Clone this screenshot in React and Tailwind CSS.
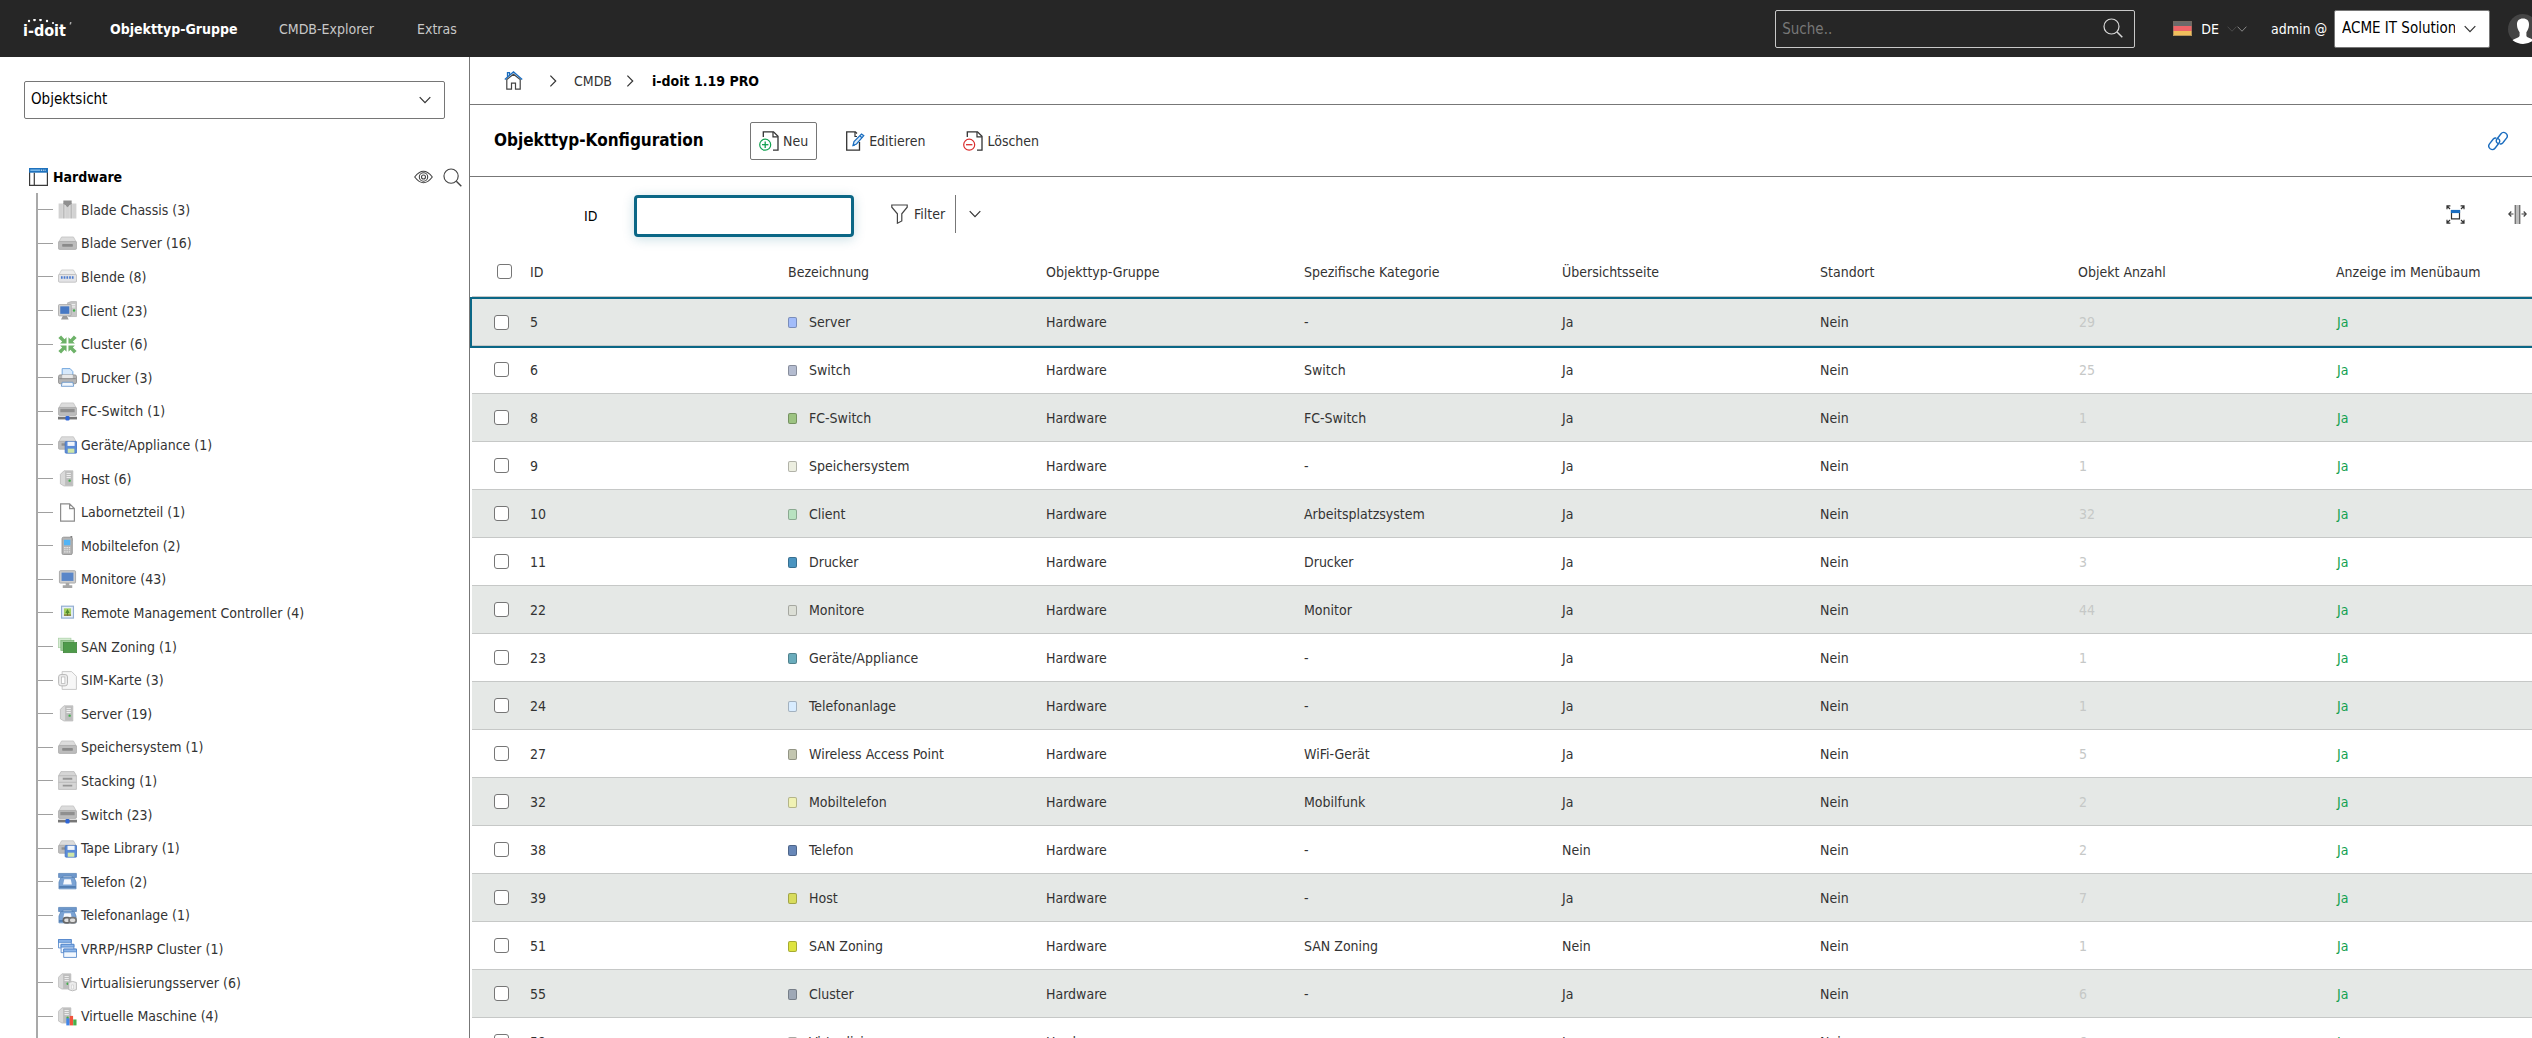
import React from 'react'

const objectTypes = [
  { icon: 'chassis', label: 'Blade Chassis (3)' },
  { icon: 'blade', label: 'Blade Server (16)' },
  { icon: 'panel', label: 'Blende (8)' },
  { icon: 'client', label: 'Client (23)' },
  { icon: 'cluster', label: 'Cluster (6)' },
  { icon: 'printer', label: 'Drucker (3)' },
  { icon: 'switch', label: 'FC-Switch (1)' },
  { icon: 'appliance', label: 'Geräte/Appliance (1)' },
  { icon: 'server', label: 'Host (6)' },
  { icon: 'page', label: 'Labornetzteil (1)' },
  { icon: 'mobile', label: 'Mobiltelefon (2)' },
  { icon: 'monitor', label: 'Monitore (43)' },
  { icon: 'remote', label: 'Remote Management Controller (4)' },
  { icon: 'zoning', label: 'SAN Zoning (1)' },
  { icon: 'sim', label: 'SIM-Karte (3)' },
  { icon: 'server', label: 'Server (19)' },
  { icon: 'blade', label: 'Speichersystem (1)' },
  { icon: 'stack', label: 'Stacking (1)' },
  { icon: 'switch', label: 'Switch (23)' },
  { icon: 'appliance', label: 'Tape Library (1)' },
  { icon: 'phone', label: 'Telefon (2)' },
  { icon: 'phoneLink', label: 'Telefonanlage (1)' },
  { icon: 'windows', label: 'VRRP/HSRP Cluster (1)' },
  { icon: 'virtualServer', label: 'Virtualisierungsserver (6)' },
  { icon: 'virtualMachine', label: 'Virtuelle Maschine (4)' },
]

const rows = [
  { id: 5, color: 'bg-[#a2bcfa]', name: 'Server', category: '-', overview: 'Ja', count: 29 },
  { id: 6, color: 'bg-[#b4bcd0]', name: 'Switch', category: 'Switch', overview: 'Ja', count: 25 },
  { id: 8, color: 'bg-[#9cc381]', name: 'FC-Switch', category: 'FC-Switch', overview: 'Ja', count: 1 },
  { id: 9, color: 'bg-[#eceee0]', name: 'Speichersystem', category: '-', overview: 'Ja', count: 1 },
  { id: 10, color: 'bg-[#b8e2c0]', name: 'Client', category: 'Arbeitsplatzsystem', overview: 'Ja', count: 32 },
  { id: 11, color: 'bg-[#4a94c0]', name: 'Drucker', category: 'Drucker', overview: 'Ja', count: 3 },
  { id: 22, color: 'bg-[#dcdfd6]', name: 'Monitore', category: 'Monitor', overview: 'Ja', count: 44 },
  { id: 23, color: 'bg-[#6aacbc]', name: 'Geräte/Appliance', category: '-', overview: 'Ja', count: 1 },
  { id: 24, color: 'bg-[#d8ecff]', name: 'Telefonanlage', category: '-', overview: 'Ja', count: 1 },
  { id: 27, color: 'bg-[#c3c6b0]', name: 'Wireless Access Point', category: 'WiFi-Gerät', overview: 'Ja', count: 5 },
  { id: 32, color: 'bg-[#f0f2b4]', name: 'Mobiltelefon', category: 'Mobilfunk', overview: 'Ja', count: 2 },
  { id: 38, color: 'bg-[#6787b8]', name: 'Telefon', category: '-', overview: 'Nein', count: 2 },
  { id: 39, color: 'bg-[#d8dc5c]', name: 'Host', category: '-', overview: 'Ja', count: 7 },
  { id: 51, color: 'bg-[#dee440]', name: 'SAN Zoning', category: 'SAN Zoning', overview: 'Nein', count: 1 },
  { id: 55, color: 'bg-[#9ea8b6]', name: 'Cluster', category: '-', overview: 'Ja', count: 6 },
  { id: 59, color: 'bg-[#dfe1d8]', name: 'Virtualisierungsserver', category: '-', overview: 'Ja', count: 6 },
]

const columns = [
  'ID',
  'Bezeichnung',
  'Objekttyp-Gruppe',
  'Spezifische Kategorie',
  'Übersichtsseite',
  'Standort',
  'Objekt Anzahl',
  'Anzeige im Menübaum',
]

/* Shared parts of the device icons */
const Box = ({ y = 4 }) => (
  <g transform={`translate(0 ${y - 4})`}>
    <path d="M3 4h10l2.500 4.500H.5z" fill="#dcdcdc" stroke="#bdbdbd" strokeWidth=".6" />
    <rect x=".4" y="7.800" width="15.200" height="6.700" rx="1" fill="#bcbcbc" stroke="#a6a6a6" strokeWidth=".6" />
  </g>
)

const Tower = () => (
  <>
    <path d="M5 1.500h7.500v12.800H5L2 12.500V4.500z" fill="#d9d9d9" stroke="#b4b4b4" strokeWidth=".6" />
    <path d="M6 1.800h6.300v12.300H6z" fill="#bdbdbd" />
    <path d="M7.200 3.700h3.600M7.200 5.500h3.600M7.200 7.200h3.600" stroke="#f2f2f2" strokeWidth=".8" />
    <circle cx="9.800" cy="9.800" r="1" fill="#3fae49" />
  </>
)

const Phone = () => (
  <>
    <path d="M2.500 4.500h11l1.700 4v5.700H.8V8.500z" fill="#7ba3d4" stroke="#5580b4" strokeWidth=".6" />
    <path d="M.5 1.200h15v3.500h-3.700V3.500H4.200v1.200H.5z" fill="#6d97cb" stroke="#5580b4" strokeWidth=".6" />
    <path d="M5.300 6h5.400l1 4.500H4.300z" fill="#f6f9fd" />
    <path d="M1 12.600h14" stroke="#4d78ad" strokeWidth="1.400" />
  </>
)

const deviceIcons = {
  chassis: (
    <>
      <path d="M.5 3h3.600v12.500H.5zM6 5h4v10.500H6zM11.900 3h3.600v12.500h-3.600z" fill="#d2d2d2" />
      <path d="M4.200 2.500h1.500v13H4.200zM10.300 2.500h1.500v13h-1.500z" fill="#bcbcbc" />
      <path d="M4.500.5h7V3L8 6 4.500 3z" fill="#8f8f8f" />
    </>
  ),
  blade: (
    <>
      <Box y={2.500} />
      <rect x="3.500" y="8.500" width="9" height="2.200" rx=".5" fill="#8a8a8a" />
    </>
  ),
  panel: (
    <>
      <path d="M3 2.500h10L15.500 7H.5z" fill="#ededed" stroke="#c4c4c4" strokeWidth=".6" />
      <rect x=".4" y="6.300" width="15.200" height="6.500" rx="1" fill="#e3e3e6" stroke="#b4b4b4" strokeWidth=".6" />
      <path d="M2.500 8.800h11" stroke="#4a7bd0" strokeWidth="2.200" strokeDasharray="1.400 .9" />
    </>
  ),
  client: (
    <>
      <path d="M8 1.500L11 .5h4.600v12.600H9z" fill="#c6c6c6" stroke="#a8a8a8" strokeWidth=".5" />
      <path d="M11.500 3h3M11.500 5h3" stroke="#eee" />
      <circle cx="13.500" cy="8" r="1" fill="#3fae49" />
      <rect x=".4" y="3" width="10.600" height="9.500" rx=".8" fill="#d3d3d3" stroke="#9d9d9d" strokeWidth=".6" />
      <rect x="1.900" y="4.500" width="7.600" height="6.300" fill="#4779c4" />
      <path d="M4 12.700h3.500l1.500 2.800H2.500z" fill="#9b9b9b" />
    </>
  ),
  cluster: (
    <g fill="#6db268">
      <path d="M7.200 7.200V1.800L5.500 3.500 2.600.4.300 2.600l3.200 2.900-1.700 1.700zM8.800 7.200h5.400l-1.700-1.700 3.200-2.900L13.400.4l-2.900 3.100-1.700-1.700z" />
      <path d="M7.200 8.800v5.400l-1.700-1.700-2.900 3.100-2.300-2.200 3.200-2.900-1.700-1.700zM8.800 8.800h5.400l-1.700 1.700 3.200 2.900-2.300 2.200-2.900-3.100-1.700 1.700z" />
    </g>
  ),
  printer: (
    <>
      <path d="M3.500 7V.5h6.700L12.500 3v4z" fill="#d7e9fb" stroke="#6fa3dc" strokeWidth=".8" />
      <rect x=".4" y="5.800" width="15.200" height="7.500" rx="1.500" fill="#b5b5b5" stroke="#8b8b8b" strokeWidth=".7" />
      <path d="M3.500 5.800h9v3h-9z" fill="#e8e8e8" />
      <path d="M1 9h14" stroke="#777" strokeWidth=".6" />
      <path d="M3.500 12h9l.7 3.400H2.800z" fill="#f1f7fd" stroke="#5c8fc9" strokeWidth=".7" />
    </>
  ),
  switch: (
    <>
      <Box y={.8} />
      <rect x="2" y="5.800" width="12" height="2.800" fill="#8f8f8f" />
      <path d="M0 12.400h16v2.300H0z" fill="#777" />
      <rect x="6.300" y="11.800" width="3.400" height="3.800" rx="1" fill="#2f66d6" />
    </>
  ),
  appliance: (
    <>
      <Box y={1.500} />
      <rect x="3" y="7" width="6" height="2" fill="#8f8f8f" />
      <rect x="6" y="5.500" width="9.800" height="9.800" rx=".8" fill="#5b8bd8" stroke="#3f6fbd" strokeWidth=".6" />
      <path d="M8 5.700h6v3.500H8z" fill="#f0f5fb" />
      <path d="M8.200 11.500h5.600v3.500H8.200z" fill="#cfe6a8" />
    </>
  ),
  server: <Tower />,
  page: (
    <path d="M2.200.7h7.600l4 4v10.600H2.200zM9.800.7v4h4" fill="#fff" stroke="#8c8c8c" strokeWidth="1" />
  ),
  mobile: (
    <>
      <path d="M10.500 0H12v4h-1.500z" fill="#7f7f7f" />
      <rect x="3.400" y="1" width="8.600" height="14.700" rx="1.300" fill="#b4b4b4" stroke="#8a8a8a" strokeWidth=".7" />
      <rect x="5" y="3.200" width="5.400" height="4.600" fill="#52b4f5" />
      <path d="M5.200 9.800h5M5.200 11.600h5M5.200 13.400h5" stroke="#e8e8e8" strokeDasharray="1.200 .7" />
    </>
  ),
  monitor: (
    <>
      <rect x="1.200" y=".6" width="13.600" height="10.400" rx=".8" fill="#cdcdcd" stroke="#9f9f9f" strokeWidth=".7" />
      <rect x="3" y="2.200" width="10" height="7" fill="#5a86c8" />
      <path d="M6.500 11h3v1.800h2.500v2.400H4v-2.400h2.500z" fill="#a6a6a6" />
    </>
  ),
  remote: (
    <>
      <rect x="3" y="2.700" width="10" height="10" fill="#e8f0fa" stroke="#93aed2" />
      <rect x="5" y="4.500" width="6" height="6.200" fill="#a5cf62" />
      <path d="M8 5l1.800 3.500H6.200zM7.500 8h1v2.700h-1z" fill="#4f8a2b" />
      <path d="M5 9.700h6v1H5z" fill="#7d6a33" />
    </>
  ),
  zoning: (
    <>
      <rect x=".4" y="1" width="10.500" height="8" fill="#d7ecd4" stroke="#a9cfa5" strokeWidth=".6" />
      <rect x="2.400" y="2.800" width="11" height="8.500" fill="#9dcb98" stroke="#7ab374" strokeWidth=".6" />
      <rect x="4.500" y="4.700" width="11.200" height="8.500" fill="#4e9a4a" stroke="#3c8338" strokeWidth=".6" />
    </>
  ),
  sim: (
    <>
      <path d="M3.500.5h8l4 4v11h-12z" fill="#f7f7f7" stroke="#c6c6c6" strokeWidth=".8" />
      <rect x=".5" y="3" width="7.500" height="9.500" rx="2" fill="#ededed" stroke="#b5b5b5" strokeWidth=".8" />
      <rect x="3" y="5" width="2.800" height="5.500" fill="#fff" stroke="#b5b5b5" strokeWidth=".6" />
    </>
  ),
  stack: (
    <>
      <path d="M2.500.5h11l2 3.500v11.500H.5V4z" fill="#d6d6d6" stroke="#b3b3b3" strokeWidth=".6" />
      <path d="M.5 4h15M.5 9.500h15" stroke="#b3b3b3" strokeWidth=".7" />
      <path d="M4 6.500h8M4 12.300h8" stroke="#969696" strokeWidth="1.600" />
    </>
  ),
  phone: <Phone />,
  phoneLink: (
    <>
      <Phone />
      <rect x="4.500" y="9.800" width="6" height="4.400" rx="2.200" fill="#ddd" stroke="#666" strokeWidth="1.400" />
      <rect x="9.300" y="9.800" width="6" height="4.400" rx="2.200" fill="#ddd" stroke="#777" strokeWidth="1.400" />
    </>
  ),
  windows: (
    <g stroke="#4d82c9" strokeWidth=".7" fill="#f1f7fe">
      <path d="M.4.500h10.800v7H.4z" />
      <path d="M.4.500h10.800v2.300H.4z" fill="#8db6ea" />
      <path d="M2.600 4.500h10.800v7H2.600z" />
      <path d="M2.600 4.500h10.800v2.300H2.600z" fill="#8db6ea" />
      <path d="M4.800 8.500h10.800v7H4.800z" />
      <path d="M4.800 8.500h10.800v2.300H4.800z" fill="#8db6ea" />
    </g>
  ),
  virtualServer: (
    <>
      <g transform="translate(-1.700 -.8)"><Tower /></g>
      <path d="M9 8q3.300-1.800 6.500 0v6q-3.200 2-6.500 0z" fill="#ececec" stroke="#b0b0b0" strokeWidth=".7" />
      <path d="M11.500 10h1.500v3.500h-1.500z" fill="#fff" stroke="#bbb" strokeWidth=".4" />
    </>
  ),
  virtualMachine: (
    <>
      <g transform="translate(-1.700 -.8)"><Tower /></g>
      <path d="M7 9.500h2.800v6H7z" fill="#3f86ea" />
      <path d="M9.900 7.500h2.800v8H9.900z" fill="#f0553c" />
      <path d="M12.800 10.500h2.800v5h-2.800z" fill="#46b04a" />
    </>
  ),
}

function DeviceIcon({ name }) {
  return (
    <svg viewBox="0 0 16 16" className="w-[19px] h-[19px] shrink-0" aria-hidden="true">
      {deviceIcons[name]}
    </svg>
  )
}

function Chevron({ className, direction = 'down' }) {
  return (
    <svg viewBox="0 0 12 12" className={className} fill="none" stroke="currentColor" strokeWidth="1.200" aria-hidden="true">
      <path d={direction === 'down' ? 'M.7 3.200L6 8.700l5.300-5.500' : 'M3.400.7L8.700 6l-5.300 5.300'} />
    </svg>
  )
}

function SearchIcon({ className }) {
  return (
    <svg viewBox="0 0 20 20" className={className} fill="none" stroke="currentColor" strokeWidth="1.200" aria-hidden="true">
      <circle cx="8.500" cy="8.500" r="7.500" />
      <path d="M14 14l5.300 5.300" strokeWidth="1.500" />
    </svg>
  )
}

function PageIcon({ kind }) {
  if (kind === 'edit') {
    return (
      <svg viewBox="0 0 20 20" className="w-5 h-5" fill="none" aria-hidden="true">
        <path d="M14.500 11v8.200H1.700V.8h8.600l1.700 1.700" stroke="#333" strokeWidth="1.300" />
        <path d="M10 1v4.500h2" stroke="#333" strokeWidth="1.200" />
        <path d="M8 14.500l1-4L16.500 3l2.300 1.700L11.500 13z" fill="#d9ebfa" stroke="#1b6dbf" strokeWidth="1.200" />
        <path d="M15 5l2 1.800M8 14.700l1.800-.8" stroke="#1b6dbf" strokeWidth="1.200" />
      </svg>
    )
  }
  const color = kind === 'new' ? '#12a150' : '#d92c2c'
  return (
    <svg viewBox="0 0 20 20" className="w-5 h-5" fill="none" aria-hidden="true">
      <path d="M4.300 6V.8h10.200l4.500 4.500v13.900h-5" stroke="#333" strokeWidth="1.300" />
      <path d="M14 1v4.800h4.800" stroke="#333" strokeWidth="1.200" />
      <circle cx="6.200" cy="13.700" r="5.500" stroke={color} strokeWidth="1.200" />
      <path d="M3 13.700h6.400" stroke={color} strokeWidth="1.300" />
      {kind === 'new' && <path d="M6.200 10.500v6.400" stroke={color} strokeWidth="1.300" />}
    </svg>
  )
}

function TopBar() {
  return (
    <header className="flex items-center h-[57px] shrink-0 bg-[#262626] text-white pl-[23px]">
      <a href="#start" className="relative flex w-[49px] h-5 mr-[38px] text-base leading-5 font-bold pt-0.5" aria-label="i-doit">
        <svg viewBox="0 0 49 20" className="absolute left-0 top-0 w-[49px] h-5" fill="currentColor" aria-hidden="true">
          <circle cx="6" cy="2" r="1.200" />
          <circle cx="11.500" cy=".9" r="1.300" />
          <circle cx="17.500" cy=".9" r="1.300" />
          <circle cx="24" cy="2" r="1.200" />
          <circle cx="30" cy="4" r="1.100" />
          <path d="M47 3h1.500L48 5.500h-1.500z" opacity=".6" />
        </svg>
        i-doit
      </a>
      <nav className="flex items-center">
        <a href="#gruppe" className="font-bold w-[169px]">Objekttyp-Gruppe</a>
        <a href="#explorer" className="text-[#c8c8c8] w-[138px]">CMDB-Explorer</a>
        <a href="#extras" className="text-[#c8c8c8]">Extras</a>
      </nav>

      <div className="flex items-center ml-auto shrink-0">
        <div className="relative w-[360px]">
          <input
            type="text"
            aria-label="Suche"
            placeholder="Suche.."
            className="block w-full h-[38px] rounded-[2px] border border-[#c8c8c8] bg-transparent px-1.5 text-[15px] placeholder:text-[#777]"
          />
          <SearchIcon className="absolute right-3 top-2 w-5 h-5 text-[#d8d8d8]" />
        </div>

        <button type="button" className="flex items-center ml-[38px] mr-6">
          <svg viewBox="0 0 19 15" className="w-[19px] h-[15px] mr-[9px]" aria-hidden="true">
            <path d="M0 0h19v5H0z" fill="#6a6a6a" />
            <path d="M0 5h19v5H0z" fill="#ee6468" />
            <path d="M0 10h19v5H0z" fill="#f0bf5c" />
            <path d="M.5.500h18v14H.5z" fill="none" stroke="#7b6a55" opacity=".5" />
          </svg>
          DE
          <span className="flex ml-2">
            <Chevron className="w-2.5 h-2.5 text-[#4a4a4a]" />
            <Chevron className="w-2.5 h-2.5 text-[#8a8a8a]" />
          </span>
        </button>

        <label htmlFor="tenant" className="mr-[7px]">admin @</label>
        <div className="relative w-[156px] mr-[18px]">
          <select id="tenant" className="block appearance-none w-full h-[38px] rounded-[2px] border border-[#767676] bg-white text-black text-[15px] pl-[7px] pr-[34px] whitespace-nowrap overflow-hidden">
            <option>ACME IT Solutions GmbH</option>
          </select>
          <Chevron className="absolute right-3.5 top-[13px] w-3 h-3 text-[#333] pointer-events-none" />
        </div>
        {/* The avatar runs past the window edge */}
        <div className="w-6 overflow-hidden">
          <svg viewBox="0 0 30 30" className="w-[30px] h-[30px] max-w-none" aria-hidden="true">
            <circle cx="15" cy="15" r="15" fill="#454545" />
            <path d="M15 4.500c4.200 0 6.200 2.500 6 6.500-.1 3-1.300 5.500-2.600 7.200v3.600c0 1.700 5 2.600 7 4.400Q20 30 15 30T4.600 26.200c2-1.800 7-2.700 7-4.400v-3.600C10.300 16.500 9.100 14 9 11c-.2-4 1.800-6.500 6-6.500z" fill="#fff" />
          </svg>
        </div>
      </div>
    </header>
  )
}

function Sidebar() {
  return (
    <aside className="flex flex-col w-[470px] shrink-0 border-r border-[#777] overflow-hidden">
      <div className="relative mt-6 mx-6 shrink-0">
        <select aria-label="Sicht" className="block appearance-none w-full h-[38px] rounded-[2px] border border-[#767676] bg-white text-black text-[15px] px-1.5">
          <option>Objektsicht</option>
        </select>
        <Chevron className="absolute right-3.5 top-[13px] w-3 h-3 text-[#333] pointer-events-none" />
      </div>

      <div className="flex items-center h-5 shrink-0 mt-12 pl-[29px] pr-[7px]">
        <svg viewBox="0 0 19 18" className="w-[19px] h-[18px]" fill="none" aria-hidden="true">
          <path d="M.6.600h17.800v16.800H.6z" fill="#fff" stroke="#3a3a3a" strokeWidth="1.200" />
          <path d="M0 0h19v4.700H0z" fill="#1f72bd" />
          <path d="M1.300 1.500h10v1.300h-10z" fill="#8ec6f0" />
          <path d="M12 2.200h5" stroke="#fff" strokeDasharray="1 .8" />
          <path d="M5.300 4.700v12.500" stroke="#3a3a3a" strokeWidth="1.200" />
        </svg>
        <h2 className="ml-[5px] font-bold text-black">Hardware</h2>
        <button type="button" aria-label="Ansicht" className="ml-auto">
          <svg viewBox="0 0 19 14" className="w-[19px] h-3.5" fill="none" stroke="#444" strokeWidth="1.100" aria-hidden="true">
            <path d="M.7 7Q9.500-4.500 18.300 7 9.500 18.500.7 7z" />
            <circle cx="9.500" cy="7" r="4.200" />
            <circle cx="9.500" cy="7" r="2" />
          </svg>
        </button>
        <button type="button" aria-label="Suchen" className="ml-2.5 text-[#444]">
          <SearchIcon className="w-[19px] h-[19px]" />
        </button>
      </div>

      <div className="flex-1 mt-1.5 ml-9 border-l-2 border-[#a9a9a9]">
        <ul className="grid auto-rows-fr min-h-[840px]">
          {objectTypes.map((type) => (
            <li key={type.label} className="flex items-center">
              <span className="w-[15px] h-px bg-[#a0a0a0]" />
              <a href="#objekttyp" className="flex items-center gap-1 ml-[5px]">
                <DeviceIcon name={type.icon} />
                {type.label}
              </a>
            </li>
          ))}
        </ul>
      </div>
    </aside>
  )
}

function Breadcrumb() {
  return (
    <nav className="flex items-center h-12 shrink-0 border-b border-[#777] pl-[34px]" aria-label="Brotkrumen">
      <a href="#home" aria-label="Start">
        <svg viewBox="0 0 19 19" className="w-[19px] h-[19px]" fill="none" aria-hidden="true">
          <path d="M2.800 8.500v9.700h4.700v-6h4v6h4.700V8.500L9.500 3.300z" stroke="#444" strokeWidth="1.200" />
          <path d="M.8 8.500L9.500.9l8.700 7.600M3.500 5.500V1.700h2v2" stroke="#1b6dbf" strokeWidth="1.300" />
        </svg>
      </a>
      <Chevron direction="right" className="w-3 h-3 ml-6" />
      <a href="#cmdb" className="ml-[15px]">CMDB</a>
      <Chevron direction="right" className="w-3 h-3 ml-3" />
      <span className="ml-4 font-bold text-black" aria-current="page">i-doit 1.19 PRO</span>
    </nav>
  )
}

function TitleBar() {
  return (
    <div className="flex items-center h-[72px] shrink-0 border-b border-[#777] pl-6 pr-6">
      <h1 className="w-[256px] text-[17px] font-bold text-black">Objekttyp-Konfiguration</h1>
      <button type="button" className="flex items-center gap-1 h-[38px] px-2 border border-[#767676] rounded-[2px]">
        <PageIcon kind="new" />
        Neu
      </button>
      <button type="button" className="flex items-center gap-1 ml-7">
        <PageIcon kind="edit" />
        Editieren
      </button>
      <button type="button" className="flex items-center gap-1 ml-[38px]">
        <PageIcon kind="delete" />
        Löschen
      </button>
      <a href="#link" aria-label="Link" className="ml-auto">
        <svg viewBox="0 0 20 20" className="w-5 h-5" fill="none" stroke="#1b6dbf" strokeWidth="1.400" strokeLinecap="round" aria-hidden="true">
          <path d="M9.600 12.200q-2.200-1.600-.8-4l4-5.200q2.200-2.800 5-.8 2.700 2.200.7 5l-3.800 4.800q-1 1.100-2.500 1" />
          <path d="M10.400 7.800q2.200 1.600.8 4l-4 5.200q-2.200 2.800-5 .8-2.700-2.200-.7-5l3.800-4.800q1-1.100 2.500-1" />
        </svg>
      </a>
    </div>
  )
}

function FilterBar() {
  return (
    <div className="flex items-start h-[78px] shrink-0 pt-[18px] pl-[114px] pr-[5px]">
      <label htmlFor="filter-id" className="w-[50px] leading-[42px] text-black">ID</label>
      <input
        id="filter-id"
        type="text"
        className="w-[220px] h-[42px] rounded-[4px] border-[3px] border-[#0b6786] shadow-[0_2px_12px_rgba(11,103,134,0.22)] outline-none px-2"
      />
      <button type="button" className="flex items-center h-[38px] ml-[37px]">
        <svg viewBox="0 0 17 20" className="w-[17px] h-5" fill="none" stroke="#444" strokeWidth="1.200" aria-hidden="true">
          <path d="M.8 1h15.400v2.200l-5.400 6.600v7.200l-4.400 2.200V9.800L.8 3.200z" />
        </svg>
        <span className="ml-1.5 mr-2.5">Filter</span>
      </button>
      <button type="button" aria-label="Weitere Filter" className="flex items-center h-[38px] border-l border-[#777] pl-[13px]">
        <Chevron className="w-3 h-3 text-[#333]" />
      </button>

      <button type="button" aria-label="Vollbild" className="flex items-center h-[38px] ml-auto">
        <svg viewBox="0 0 19 19" className="w-[19px] h-[19px]" fill="none" stroke="#333" strokeWidth="1.200" aria-hidden="true">
          <path d="M5.500 5.500h8v8.300h-8z" />
          <path d="M4.900 4.900h9.200v3.200H4.900z" fill="#1b6dbf" stroke="none" />
          <path d="M4 4L1 1M1 4.200V.8h3.400M15 4l3-3M14.600.8H18v3.400M4 15l-3 3M1 14.800v3.400h3.400M15 15l3 3M14.600 18.200H18v-3.400" />
        </svg>
      </button>
      <button type="button" aria-label="Spaltenbreite" className="flex items-center h-[38px] ml-[43px]">
        <svg viewBox="0 0 19 19" className="w-[19px] h-[19px]" fill="none" stroke="#444" strokeWidth="1.200" aria-hidden="true">
          <path d="M7.500 0h4v19h-4z" fill="#bdbdbd" stroke="none" />
          <path d="M7.200 0v19M11.800 0v19" strokeWidth="1" />
          <path d="M5.500 9H1M3.300 6.500L.8 9l2.500 2.500M13.500 9H18M15.700 6.500L18.200 9l-2.500 2.500" />
        </svg>
      </button>
    </div>
  )
}

function Checkbox({ label }) {
  return (
    <input
      type="checkbox"
      aria-label={label}
      className="appearance-none block w-[15px] h-[15px] rounded-[3px] border border-[#767676] bg-white checked:bg-[#0b6786]"
    />
  )
}

function ObjectTable() {
  return (
    <table className="table-fixed w-full min-w-[2109px] border-separate border-spacing-0 text-left">
      <colgroup>
        <col className="w-[45px]" />
        {columns.map((c) => (
          <col key={c} />
        ))}
      </colgroup>
      <thead>
        <tr className="h-11">
          <th className="border-b-[3px] border-[#c6c8c7] pl-[25px] pb-2">
            <Checkbox label="Alle auswählen" />
          </th>
          {columns.map((c) => (
            <th key={c} className="border-b-[3px] border-[#c6c8c7] pl-[13px] pb-2 font-normal">{c}</th>
          ))}
        </tr>
      </thead>
      <tbody>
        {rows.map((row, i) => (
          <tr
            key={row.id}
            className={
              i === 0
                ? 'relative h-[47px] bg-[#e5e8e6] outline-2 outline-[#0b6786] [&>td]:border-b [&>td]:border-[#c6c8c7]'
                : 'h-12 even:bg-white odd:bg-[#e5e8e6] [&>td]:border-b [&>td]:border-[#c6c8c7]'
            }
          >
            <td className="pl-[22px]"><Checkbox label={row.name} /></td>
            <td className="pl-[13px]">{row.id}</td>
            <td className="pl-[13px]">
              <span className={`inline-block w-[9px] h-[11px] rounded-[2px] border border-black/25 align-[-1px] mr-3 ${row.color}`} />
              {row.name}
            </td>
            <td className="pl-[13px]">Hardware</td>
            <td className="pl-[13px]">{row.category}</td>
            <td className="pl-[13px]">{row.overview}</td>
            <td className="pl-[13px]">Nein</td>
            <td className="pl-3.5 text-[#c6c8c7]">{row.count}</td>
            <td className="pl-3.5 text-[#12a150]">Ja</td>
          </tr>
        ))}
      </tbody>
    </table>
  )
}

function App() {
  return (
    <div className="flex flex-col h-screen overflow-hidden bg-white text-sm text-[#333] font-['DejaVu_Sans_Condensed','DejaVu_Sans',sans-serif]">
      <TopBar />
      <div className="flex flex-1 min-h-0">
        <Sidebar />
        <main className="flex flex-col flex-1 min-w-0 overflow-hidden">
          <Breadcrumb />
          <TitleBar />
          <FilterBar />
          <div className="pl-0.5">
            <ObjectTable />
          </div>
        </main>
      </div>
    </div>
  )
}

export default App
